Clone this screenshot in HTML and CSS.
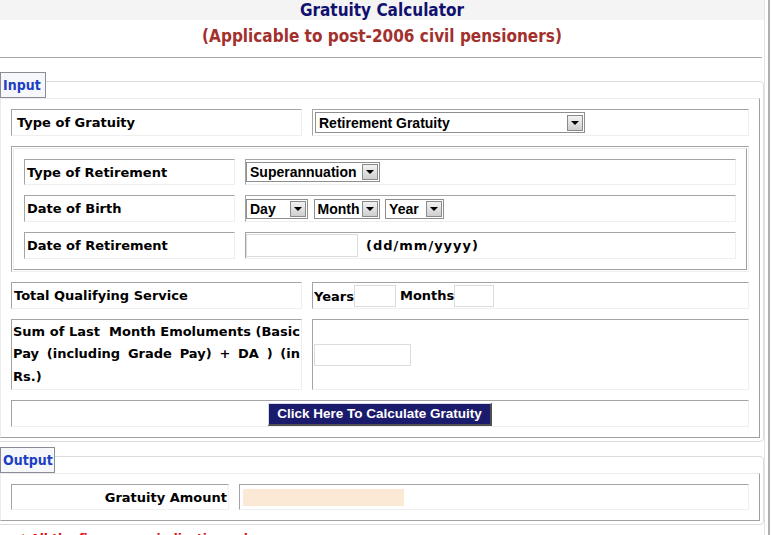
FILE: index.html
```
<!DOCTYPE html>
<html>
<head>
<meta charset="utf-8">
<title>Gratuity Calculator</title>
<link rel="stylesheet" href="styles.css">
</head>
<body>
<div class="frame">
<div class="page">
  <div class="topbar"><h1 class="title">Gratuity Calculator</h1></div>
  <h2 class="subtitle">(Applicable to post-2006 civil pensioners)</h2>
  <div class="rule"></div>

  <div class="fs fs-input">
    <div class="legend">Input</div>
    <table class="grid outer">
      <tr class="h27">
        <td class="lbl c1 pl5">Type of Gratuity</td>
        <td class="val c2"><span class="sel sel-grat"><span class="sel-text">Retirement Gratuity</span><span class="arr"></span></span></td>
      </tr>
      <tr>
        <td colspan="2" class="nest">
          <table class="grid inner">
            <tr class="h26">
              <td class="lbl n1">Type of Retirement</td>
              <td class="val n2 pl0"><span class="sel sel-ret"><span class="sel-text">Superannuation</span><span class="arr"></span></span></td>
            </tr>
            <tr class="h27">
              <td class="lbl">Date of Birth</td>
              <td class="val pl0">
                <span class="sel sel-day"><span class="sel-text">Day</span><span class="arr"></span></span>
                <span class="sel sel-month"><span class="sel-text">Month</span><span class="arr"></span></span>
                <span class="sel sel-year"><span class="sel-text">Year</span><span class="arr"></span></span>
              </td>
            </tr>
            <tr class="h27">
              <td class="lbl">Date of Retirement</td>
              <td class="val pl0"><input class="txt in-dor" type="text"><span class="hint">(dd/mm/yyyy)</span></td>
            </tr>
          </table>
        </td>
      </tr>
      <tr class="h27">
        <td class="lbl">Total Qualifying Service</td>
        <td class="val pl1"><span class="unit">Years</span><input class="txt in-yr" type="text"><span class="unit unit-m">Months</span><input class="txt in-mo" type="text"></td>
      </tr>
      <tr class="h71">
        <td class="lbl just">Sum of Last&nbsp; Month Emoluments (Basic Pay (including Grade Pay) + DA ) (in Rs.)</td>
        <td class="val pl1"><input class="txt in-sum" type="text"></td>
      </tr>
      <tr class="h27">
        <td colspan="2" class="btn-cell"><button class="calc" type="button">Click Here To Calculate Gratuity</button></td>
      </tr>
    </table>
  </div>

  <div class="fs fs-output">
    <div class="legend legend-out">Output</div>
    <table class="grid outer">
      <tr class="h26">
        <td class="lbl o1 right">Gratuity Amount</td>
        <td class="val o2 pl3"><input class="txt in-out" type="text" readonly></td>
      </tr>
    </table>
  </div>

  <p class="note">* All the figures are indicative only.</p>
</div>
</div>
</body>
</html>
```

FILE: styles.css
```
html, body {
  margin: 0;
  padding: 0;
  background: #ffffff;
  overflow: hidden;
}

.frame {
  width: 768px;
  min-height: 535px;
  border-right: 2px solid #b0b0b0;
}

.page {
  width: 764px;
  min-height: 535px;
  border-right: 1px solid #e4e4e4;
  font-family: "DejaVu Sans", Verdana, sans-serif;
}

.topbar {
  height: 20px;
  background: #f4f4f4;
}

.title {
  margin: 0;
  font-family: "DejaVu Sans Condensed", "DejaVu Sans", sans-serif;
  font-weight: bold;
  font-size: 17px;
  line-height: 20px;
  text-align: center;
  color: #10106e;
}

.subtitle {
  margin: 0;
  padding-top: 5px;
  font-family: "DejaVu Sans Condensed", "DejaVu Sans", sans-serif;
  font-weight: bold;
  font-size: 17px;
  line-height: 22px;
  text-align: center;
  color: #a3302c;
}

.rule {
  width: 762px;
  height: 0;
  margin-top: 10px;
  border-top: 1px solid #a8a8a8;
}

.fs {
  margin-left: -4px;
  width: 760px;
  padding: 0 3px 3px 3px;
  border: 1px solid #dcdcdc;
  border-radius: 4px;
}

.fs-input {
  margin-top: 23px;
}

.fs-output {
  margin-top: 14px;
}

.legend {
  width: 42px;
  height: 24px;
  margin-top: -10px;
  margin-left: 0;
  border: 1px solid #8c8c96;
  background: #f6f7fa;
  font-family: "DejaVu Sans Condensed", "DejaVu Sans", sans-serif;
  font-weight: bold;
  font-size: 14px;
  line-height: 24px;
  color: #1c3ec4;
  padding-left: 2px;
  box-sizing: content-box;
}

.legend-out {
  width: 51px;
}

.grid {
  border-collapse: separate;
  border-spacing: 10px;
  table-layout: fixed;
  border-top: 1px solid #ececec;
  border-left: 1px solid #ececec;
  border-right: 1px solid #a0a0a0;
  border-bottom: 1px solid #a0a0a0;
}

.outer {
  width: 760px;
}

.inner {
  width: 734px;
}

.grid td {
  box-sizing: border-box;
  padding: 0 0 0 2px;
  border-top: 1px solid #a4a4a4;
  border-left: 1px solid #a4a4a4;
  border-right: 1px solid #efefef;
  border-bottom: 1px solid #efefef;
  vertical-align: middle;
  font-size: 13px;
  font-weight: bold;
  color: #000000;
}

.c1 { width: 291px; }
.c2 { width: 437px; }
.n1 { width: 211px; }
.n2 { width: 491px; }
.o1 { width: 218px; }
.o2 { width: 510px; }

.h26 td { height: 26px; }
.h27 td { height: 27px; }
.h71 td { height: 71px; }

.grid td.pl5 { padding-left: 5px; }
.grid td.pl0 { padding-left: 0; }
.grid td.pl1 { padding-left: 1px; }
.grid td.pl3 { padding-left: 3px; }
.grid td.right { text-align: right; padding-right: 1px; }

.grid td.nest {
  padding: 1px;
}

.grid td.just {
  text-align: justify;
  line-height: 22.5px;
  padding-left: 1px;
  padding-right: 1px;
}

.grid td.btn-cell {
  text-align: center;
  padding: 0;
}

/* fake select boxes */
.sel {
  display: inline-flex;
  align-items: center;
  box-sizing: border-box;
  height: 20px;
  border: 1px solid #8e8e8e;
  background: #ffffff;
  font-family: "Liberation Sans", Arial, sans-serif;
  font-weight: bold;
  font-size: 14px;
  color: #000000;
  vertical-align: middle;
  padding-left: 3px;
  justify-content: space-between;
}

.sel-grat { width: 270px; height: 21px; }
.sel-ret { width: 134px; }
.sel-day { width: 62px; }
.sel-month { width: 66px; margin-left: 1px; }
.sel-year { width: 59px; margin-left: 1px; }

.sel-text {
  white-space: nowrap;
}

.arr {
  display: inline-block;
  position: relative;
  box-sizing: border-box;
  width: 16px;
  height: 16px;
  margin-right: 1px;
  border: 1px solid #8a8a8a;
  background: linear-gradient(#f2f2f2, #cfcfcf);
}

.arr::after {
  content: "";
  position: absolute;
  left: 3px;
  top: 5px;
  border-left: 4px solid transparent;
  border-right: 4px solid transparent;
  border-top: 4px solid #000000;
}

.txt {
  box-sizing: border-box;
  border: 1px solid #dcdcdc;
  background: #ffffff;
  padding: 0;
  margin: 0;
  vertical-align: middle;
  font-size: 12px;
}

.in-dor { width: 112px; height: 23px; }
.in-yr { width: 42px; height: 22px; }
.in-mo { width: 40px; height: 22px; }
.in-sum { width: 97px; height: 22px; }

.in-out {
  width: 161px;
  height: 17px;
  border: none;
  background: #fbe9d6;
}

.hint {
  display: inline-block;
  margin-left: 8px;
  letter-spacing: 1px;
  vertical-align: middle;
}

.unit {
  vertical-align: middle;
}

.unit-m {
  margin-left: 4px;
}

.calc {
  box-sizing: border-box;
  width: 224px;
  height: 23px;
  margin-top: 1px;
  padding: 0;
  background: #1b1b6e;
  color: #ffffff;
  font-family: "Liberation Sans", Arial, sans-serif;
  font-weight: bold;
  font-size: 13.5px;
  border-top: 1px solid #d8d8e8;
  border-left: 1px solid #d8d8e8;
  border-right: 2px solid #505050;
  border-bottom: 2px solid #505050;
  vertical-align: middle;
}

.note {
  margin: 7px 0 0 20px;
  font-family: "DejaVu Sans", sans-serif;
  font-weight: bold;
  font-size: 12px;
  color: #e01010;
}
```
